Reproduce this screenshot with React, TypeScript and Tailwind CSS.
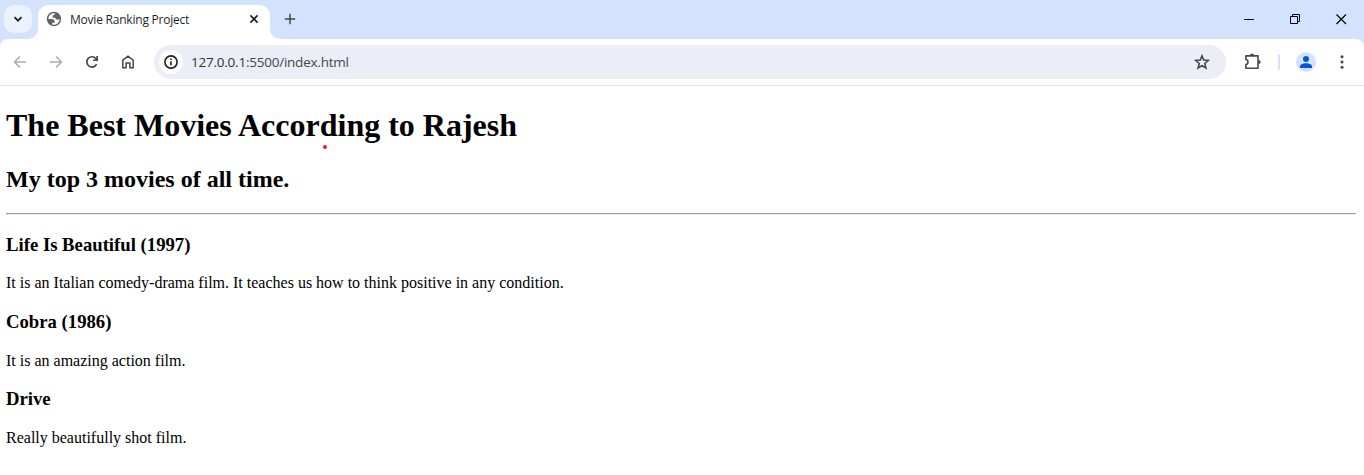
import type { ReactNode } from "react";

const movies = [
  {
    title: "Life Is Beautiful (1997)",
    text: "It is an Italian comedy-drama film. It teaches us how to think positive in any condition.",
  },
  { title: "Cobra (1986)", text: "It is an amazing action film." },
  { title: "Drive", text: "Really beautifully shot film." },
];

function Icon({ size, box = "0 0 24 24", className = "", children }: { size: number; box?: string; className?: string; children: ReactNode }) {
  return (
    <svg width={size} height={size} viewBox={box} fill="none" className={`block shrink-0 ${className}`}>
      {children}
    </svg>
  );
}

function TabStrip() {
  return (
    <div className="flex h-[39px] bg-[#d3e3fd]">
      <button className="mt-[5px] ml-1 flex size-7 shrink-0 items-center justify-center rounded-[10px] bg-[#ebf2fe]">
        <Icon size={10} box="0 0 10 10">
          <path d="M1.5 3.2 5 6.7 8.5 3.2" stroke="#1f1f1f" strokeWidth="1.8" />
        </Icon>
      </button>
      <Icon size={10} box="0 0 10 10" className="mt-[29px] -ml-[4px]">
        <path d="M0 10A10 10 0 0 0 10 0V10Z" fill="#fff" />
      </Icon>
      <div className="mt-[5px] flex h-[34px] w-[232px] rounded-t-[10px] bg-white">
        <Icon size={16} box="0.8 0.8 22.4 22.4" className="mt-[6px] ml-2">
          <path
            d="M12 2C6.480 2 2 6.480 2 12s4.480 10 10 10 10-4.480 10-10S17.520 2 12 2zM4 12h4.400c3.407.022 4.922 1.730 4.543 5.127H9.488v2.470a8.004 8.004 0 0 0 10.498-8.083C19.327 12.504 18.332 13 17 13c-2.137 0-3.206-.916-3.206-2.750h-3.748c-.274-2.728.683-4.092 2.870-4.092 0-.975.327-1.597.811-1.970A8.004 8.004 0 0 0 4 12z"
            fill="#5f6368"
            fillRule="evenodd"
          />
        </Icon>
        <span className="ml-2 h-7 w-[119px] font-['Open_Sans',sans-serif] text-[12px] leading-[29px] tracking-[-0.22px] whitespace-nowrap text-[#1f1f1f]">
          Movie Ranking Project
        </span>
        <Icon size={10} box="0 0 10 10" className="mt-[9px] ml-[60px]">
          <path d="m1.400 1.400 7.200 7.200m0-7.200-7.200 7.200" stroke="#1f1f1f" strokeWidth="1.600" />
        </Icon>
      </div>
      <Icon size={10} box="0 0 10 10" className="mt-[29px]">
        <path d="M0 0A10 10 0 0 0 10 10H0Z" fill="#fff" />
      </Icon>
      <Icon size={12} box="0 0 12 12" className="mt-[13px] ml-1">
        <path d="M6 .8v10.400M.8 6h10.400" stroke="#474747" strokeWidth="1.500" />
      </Icon>
      <div className="mt-[14px] mr-[17px] ml-auto flex gap-[36px]">
        <Icon size={10} box="0 0 10 10">
          <path d="M0 5.500h10" stroke="#000" />
        </Icon>
        <Icon size={10} box="0 0 10 10">
          <path d="M.5 2.500h7v7h-7ZM2.500 2.500v-2h7v7h-2" stroke="#000" />
        </Icon>
        <Icon size={11} box="0 0 11 11">
          <path d="m.5.500 9.500 9.500m0-9.500-9.500 9.500" stroke="#000" strokeWidth="1.200" />
        </Icon>
      </div>
    </div>
  );
}

function Toolbar() {
  return (
    <div className="bg-[#d3e3fd]">
      <div className="flex h-[47px] items-start rounded-t-[8px] border-b border-[#e1e3e1] bg-white pt-[6px]">
        <div className="flex h-[34px] w-[154px] items-center pl-[12px]">
          <Icon size={16} box="0 0 16 16">
            <path d="M14 8H3M8 2.500 2.500 8 8 13.500" stroke="#ababab" strokeWidth="1.500" />
          </Icon>
          <Icon size={16} box="0 0 16 16" className="ml-5">
            <path d="M2 8h11M8 2.500 13.500 8 8 13.500" stroke="#ababab" strokeWidth="1.500" />
          </Icon>
          <Icon size={16} box="0 0 16 16" className="ml-5">
            <path d="M12.600 10.200A5.150 5.150 0 1 1 12 4.700L13.200 6" stroke="#474747" strokeWidth="1.700" />
            <path d="M14 2v5H9V5.600h3.300V2Z" fill="#474747" />
          </Icon>
          <Icon size={16} box="0 0 16 16" className="ml-5">
            <path d="M2.800 6.200 8 2.200l5.200 4v7.600H9.900V8.900H6.100v4.900H2.800Z" stroke="#474747" strokeWidth="1.500" />
          </Icon>
        </div>
        <div className="flex h-[34px] w-[1072px] items-center rounded-full bg-[#ebeef7] pr-4 pl-[5px]">
          <div className="flex size-6 items-center justify-center rounded-full bg-white">
            <Icon size={16} box="0 0 16 16">
              <circle cx="8" cy="8" r="6.100" stroke="#1f1f1f" strokeWidth="1.600" />
              <path d="M8 7.200v4M8 4.500v1.600" stroke="#1f1f1f" strokeWidth="1.600" />
            </Icon>
          </div>
          <span className="ml-2 font-['Open_Sans',sans-serif] text-[13.5px] leading-5 tracking-[-0.23px] whitespace-nowrap text-[#474747]">
            <span className="text-[#303134]">127.0.0.1</span>:5500/index.html
          </span>
          <Icon size={16} box="0 0 16 16" className="ml-auto">
            <path
              d="m8 1.800 1.700 4.300 4.600.4-3.500 3 1.100 4.500L8 11.600 4.100 14l1.100-4.500-3.500-3 4.600-.4Z"
              stroke="#474747"
              strokeWidth="1.600"
            />
          </Icon>
        </div>
        <Icon size={18} box="0 0 18 18" className="mt-2 ml-[18px]">
          <path d="M1.900 2.900H14V15.200H1.900V11.600A2.600 2.600 0 0 0 1.900 6.500Z" stroke="#474747" strokeWidth="1.600" strokeLinejoin="round" />
          <path d="M6 2.500a2 2 0 0 1 4 0ZM14.600 7a2 2 0 0 1 0 4Z" fill="#474747" />
        </Icon>
        <div className="mt-[9px] ml-4 h-4 w-[2px] rounded-full bg-[#d3e3fd]" />
        <div className="mt-[7px] ml-4 flex size-5 items-center justify-center rounded-full bg-[#d3e3fd]">
          <Icon size={14} box="0 0 14 14">
            <circle cx="7" cy="4" r="3" fill="#0b57d0" />
            <path d="M1 13v-1.700C1 9.500 3.700 8.200 7 8.200s6 1.300 6 3.100V13Z" fill="#0b57d0" />
          </Icon>
        </div>
        <Icon size={16} box="0 0 16 16" className="mt-[9px] ml-[18px]">
          <g fill="#474747">
            <circle cx="8" cy="2.700" r="1.500" />
            <circle cx="8" cy="8" r="1.500" />
            <circle cx="8" cy="13.300" r="1.500" />
          </g>
        </Icon>
      </div>
    </div>
  );
}

export default function App() {
  return (
    <div className="h-[475px] w-[1364px] overflow-hidden bg-white">
      <TabStrip />
      <Toolbar />
      <main className="flex flex-col pr-2 pl-[6px] font-['Liberation_Serif',serif] text-black">
        <h1 className="relative mt-[21px] w-fit text-[32px] leading-[37px] font-bold whitespace-nowrap">
          The Best Movies According to Rajesh
          <span className="absolute top-[38px] left-[317px] size-1 rounded-full bg-[#ed1c24]" />
        </h1>
        <h2 className="mt-[22px] text-[24px] leading-[27px] font-bold">My top 3 movies of all time.</h2>
        <hr className="mt-5 h-[2px] border border-t-[#9a9a9a] border-r-[#eeeeee] border-b-[#eeeeee] border-l-[#9a9a9a]" />
        {movies.map((movie) => (
          <section key={movie.title} className="mt-[18.700px]">
            <h3 className="text-[18.720px] leading-[22px] font-bold">{movie.title}</h3>
            <p className="mt-[18.700px] text-[16px] leading-[18px]">{movie.text}</p>
          </section>
        ))}
      </main>
    </div>
  );
}
